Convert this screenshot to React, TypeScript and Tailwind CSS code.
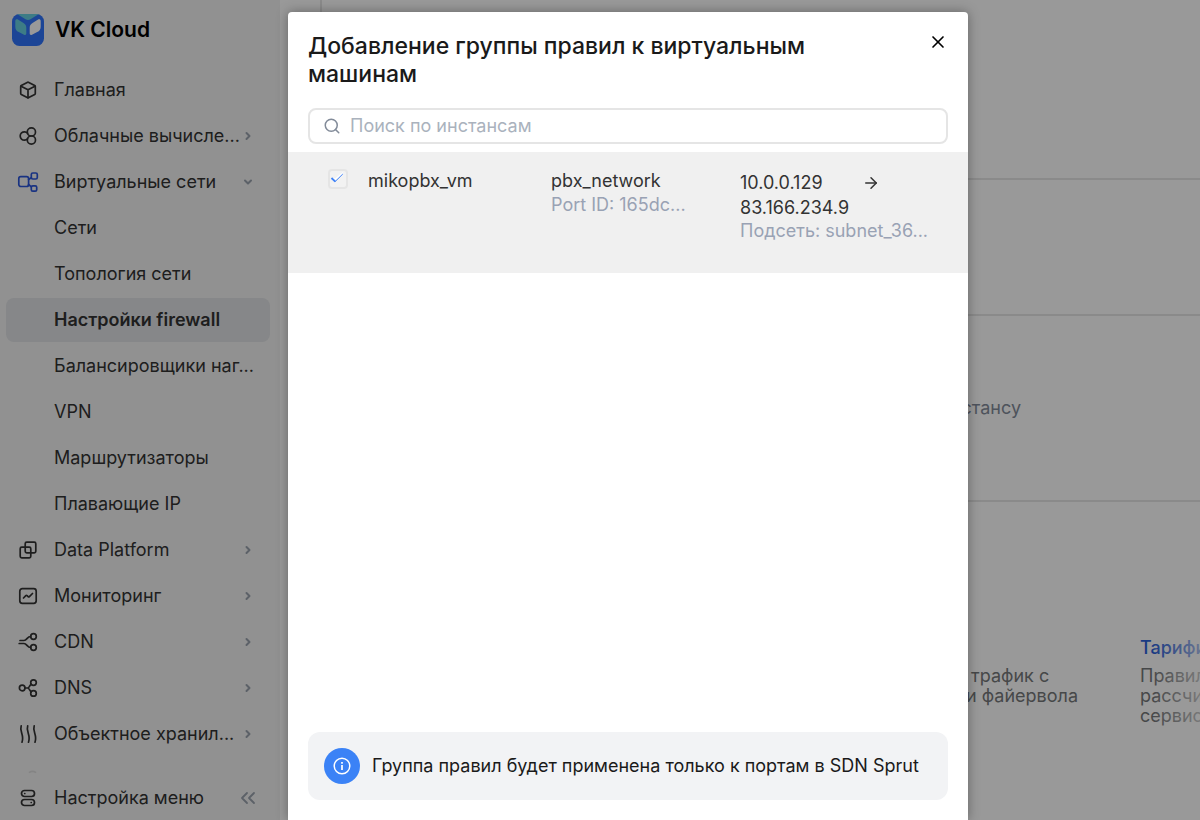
import { useState, type ReactNode } from "react";
import { ArrowRight, ChevronDown, ChevronRight, ChevronsLeft, Search, X } from "lucide-react";

type NavItem = {
  label: string;
  icon?: ReactNode;
  arrow?: "right" | "down";
  active?: boolean;
};

function Icon({ children, className = "" }: { children: ReactNode; className?: string }) {
  return (
    <svg
      viewBox="0 0 24 24"
      className={`size-6 ${className}`}
      fill="none"
      stroke="currentColor"
      strokeWidth="1.7"
      strokeLinecap="round"
      strokeLinejoin="round"
      aria-hidden="true"
    >
      {children}
    </svg>
  );
}

const CubeIcon = (
  <Icon>
    <path d="M11.2 4.4 5.3 7.6a1.2 1.2 0 0 0-.6 1v6.8c0 .4.2.8.6 1l5.9 3.2c.5.3 1.1.3 1.6 0l5.9-3.2c.4-.2.6-.6.6-1V8.6a1.2 1.2 0 0 0-.6-1l-5.9-3.2a1.7 1.7 0 0 0-1.6 0Z" />
    <path d="m5 8.2 7 3.6 7-3.6M12 11.8v8" />
  </Icon>
);

const ComputeIcon = (
  <Icon>
    <path d="M11.6 9.3a4.2 4.2 0 1 0 0 5.4" />
    <circle cx="15.4" cy="7.9" r="4.1" />
    <circle cx="15.4" cy="16.1" r="4.1" />
  </Icon>
);

const NetworkIcon = (
  <Icon className="text-[#2b55d9]">
    <rect x="2.8" y="6.7" width="9.8" height="9.8" rx="2" />
    <rect x="15.3" y="3" width="6" height="6" rx="1.5" />
    <rect x="15.3" y="15.8" width="5.4" height="5.4" rx="1.5" />
    <path d="m12.6 9.5 2.7-1.8M12.6 14.5l2.7 2.3" />
  </Icon>
);

const PlatformIcon = (
  <Icon>
    <rect x="9.2" y="4.2" width="10.6" height="10.6" rx="1.5" />
    <rect x="4.2" y="9.2" width="10.6" height="10.6" rx="1.5" />
  </Icon>
);

const MonitoringIcon = (
  <Icon>
    <rect x="3.8" y="4.7" width="16.4" height="14.6" rx="2.5" />
    <path d="m7.5 14 2.3-2.4c.4-.4.9-.4 1.3 0l1 1c.4.4.9.4 1.3 0l3.1-3.1" />
  </Icon>
);

const CdnIcon = (
  <Icon>
    <circle cx="17.5" cy="6.5" r="2.8" />
    <circle cx="17.5" cy="17.5" r="2.8" />
    <path d="M4 10.5h4c3 0 3-4 6.700-4M3.2 13.5H8c3 0 3 4 6.7 4" />
  </Icon>
);

const DnsIcon = (
  <Icon>
    <circle cx="6.2" cy="12" r="2.8" />
    <circle cx="17.5" cy="6.6" r="2.8" />
    <circle cx="17.5" cy="17.4" r="2.8" />
    <path d="M9 12h2.5c2 0 1.7-2.5 3.7-3.7M11.5 12c2 0 1.7 2.5 3.7 3.7" />
  </Icon>
);

const StorageIcon = (
  <Icon>
    <path d="M5.2 3.8c-2 5.5 3.4 9.500.8 16.400M11.700 3.800c-2 5.500 3.400 9.500.8 16.400M18.200 3.800c-2 5.500 3.400 9.500.8 16.400" />
  </Icon>
);

const MenuSettingsIcon = (
  <Icon>
    <rect x="5.5" y="4.5" width="13" height="6" rx="3" />
    <rect x="5.5" y="13.5" width="13" height="6" rx="3" />
    <path d="M8.7 7.5h.1M15.2 16.5h.1" />
  </Icon>
);

const NAV: NavItem[] = [
  { label: "Главная", icon: CubeIcon },
  { label: "Облачные вычисле...", icon: ComputeIcon, arrow: "right" },
  { label: "Виртуальные сети", icon: NetworkIcon, arrow: "down" },
  { label: "Сети" },
  { label: "Топология сети" },
  { label: "Настройки firewall", active: true },
  { label: "Балансировщики наг..." },
  { label: "VPN" },
  { label: "Маршрутизаторы" },
  { label: "Плавающие IP" },
  { label: "Data Platform", icon: PlatformIcon, arrow: "right" },
  { label: "Мониторинг", icon: MonitoringIcon, arrow: "right" },
  { label: "CDN", icon: CdnIcon, arrow: "right" },
  { label: "DNS", icon: DnsIcon, arrow: "right" },
  { label: "Объектное хранил...", icon: StorageIcon, arrow: "right" },
];

function Logo() {
  return (
    <svg viewBox="0 0 32 32" className="size-8" aria-hidden="true">
      <rect width="32" height="32" rx="7.5" fill="#2f73fa" />
      <path d="M5.5.3C6.3 0 7 0 7.500 0h17c.500 0 1.200 0 2 .3L18.500 5.200c-1.600 1-3.400 1-5 0Z" fill="#66cfe0" />
      <path d="M3.3 7.200c0-2 1.400-2.500 3-1.500l5.200 3.400c1.900 1.200 2.800 2.600 2.800 4.800v5.400c0 1.500-.9 2.100-2.300 1.400l-5.200-2.600c-2.400-1.200-3.500-2.900-3.500-5.400Z" fill="#66cfe0" />
      <path d="M28.700 7.200c0-2-1.400-2.500-3-1.500l-5.200 3.400c-1.900 1.200-2.800 2.600-2.800 4.800v5.400c0 1.500.9 2.100 2.300 1.400l5.200-2.600c2.400-1.200 3.500-2.900 3.500-5.400Z" fill="#fff" />
    </svg>
  );
}

function Sidebar() {
  return (
    <aside className="flex w-[280px] shrink-0 flex-col bg-[#f2f2f2] text-[#333]">
      <a href="#" className="flex h-[60px] shrink-0 items-center gap-[11px] pl-3 text-black">
        <Logo />
        <span className="text-[21px] font-semibold">VK Cloud</span>
      </a>
      <nav className="flex min-h-0 flex-1 flex-col gap-0.5 overflow-hidden px-1.5 pt-2">
        {NAV.map((item) => (
          <a
            key={item.label}
            href="#"
            className={`mr-1 flex h-11 shrink-0 items-center rounded-lg pl-2.5 pr-4 ${
              item.active ? "bg-[#dfe1e4] font-semibold" : ""
            }`}
          >
            <span className="mr-3.5 size-6 shrink-0">{item.icon}</span>
            <span className="min-w-0 flex-1 whitespace-nowrap">{item.label}</span>
            {item.arrow === "right" && <ChevronRight className="size-3 shrink-0 text-[#99a2ad]" strokeWidth={4} />}
            {item.arrow === "down" && <ChevronDown className="size-3 shrink-0 text-[#99a2ad]" strokeWidth={4} />}
          </a>
        ))}
        <span className="pl-2.5 pt-2.5 text-[#ddd]">
          <Icon>
            <path d="M13.5 4.3c1.8-1 4.2-1 6 0" />
          </Icon>
        </span>
      </nav>
      <div className="flex h-11 shrink-0 items-center gap-3.5 pl-4 pr-5">
        {MenuSettingsIcon}
        <a href="#" className="flex-1">Настройка меню</a>
        <button type="button" aria-label="Свернуть меню" className="text-[#99a2ad]">
          <ChevronsLeft className="size-6" strokeWidth={1.8} />
        </button>
      </div>
    </aside>
  );
}

function PageContent() {
  return (
    <main className="relative min-w-0 flex-1 overflow-hidden bg-white pl-10 text-[#76787a]">
      <section className="border-l-2 border-[#e6e6e6]">
        <div className="h-[180px] border-b-2 border-[#e6e6e6]" />
        <div className="h-[136px] border-b-2 border-[#e6e6e6]" />
        <div className="flex h-[186px] items-center justify-end border-b-2 border-[#e6e6e6] pr-[179px] text-[#828b99]">
          стансу
        </div>
      </section>
      <section className="flex justify-end pt-[134px] leading-5">
        <div className="w-[174px] whitespace-pre pt-[30px]">
          <p>{" трафик с"}</p>
          <p>и файервола</p>
        </div>
        <div className="w-[60px] whitespace-nowrap">
          <a href="#" className="mb-2 mt-0.5 block font-medium text-[#2b62db]">Тарифи</a>
          <p>Правил</p>
          <p>рассчи</p>
          <p>сервис</p>
        </div>
      </section>
      <div className="absolute bottom-0 right-0 h-[220px] w-12 bg-linear-to-r from-white/0 to-white/60" />
    </main>
  );
}

function AddGroupDialog() {
  const [query, setQuery] = useState("");
  const [checked, setChecked] = useState(true);

  return (
    <div
      role="dialog"
      aria-labelledby="dialog-title"
      className="flex w-[680px] flex-col rounded-t-[4px] bg-white text-[#333] shadow-[0_0_12px_rgba(0,0,0,0.35)]"
    >
      <header className="flex items-start justify-between px-5 pt-5">
        <h2 id="dialog-title" className="max-w-[560px] text-[23px] font-medium leading-7 text-[#1a1a1a]">
          Добавление группы правил к виртуальным машинам
        </h2>
        <button type="button" aria-label="Закрыть" className="text-black">
          <X className="size-5" strokeWidth={2} />
        </button>
      </header>

      <label className="mx-5 mt-5 flex h-9 items-center gap-[9px] rounded-lg border-2 border-[#e5e5e5] pl-[13px]">
        <Search className="size-[18px] text-[#828b99]" strokeWidth={2} />
        <input
          type="text"
          value={query}
          onChange={(e) => setQuery(e.target.value)}
          placeholder="Поиск по инстансам"
          aria-label="Поиск по инстансам"
          className="min-w-0 flex-1 outline-none placeholder:text-[#aab2bd]"
        />
      </label>

      <div className="mt-2 flex-1">
        <table className="w-full table-fixed">
          <tbody>
            <tr className="h-[121px] bg-[#f0f0f0] align-top">
              <td className="w-20 pl-10 pt-[17px]">
                <label className="relative block size-5">
                  <input
                    type="checkbox"
                    checked={checked}
                    onChange={(e) => setChecked(e.target.checked)}
                    aria-label="mikopbx_vm"
                    className="block size-5 appearance-none rounded-[4px] border-2 border-[#e5e5e5] bg-[#f2f2f2]"
                  />
                  {checked && (
                    <svg viewBox="0 0 20 20" className="pointer-events-none absolute inset-0 size-5" fill="none" aria-hidden="true">
                      <path d="M4 8.5 7 12l8-7V3L7 9.5Z" fill="#fff" />
                      <path d="M3.5 9 7.3 12.7" stroke="#3f82f7" strokeWidth="1.8" />
                      <path d="M7 12.7 14.8 5" stroke="#3f82f7" strokeWidth="1" />
                    </svg>
                  )}
                </label>
              </td>
              <td className="w-[183px] pt-[17px] leading-6">mikopbx_vm</td>
              <td className="w-[189px] pt-[17px] leading-6">
                <div>pbx_network</div>
                <div className="text-[#99a2b4]">Port ID: 165dc...</div>
              </td>
              <td className="pt-[18px] leading-[25px]">
                <div className="flex items-center">
                  <span className="w-[122px]">10.0.0.129</span>
                  <ArrowRight className="size-[18px]" strokeWidth={2} />
                </div>
                <div>83.166.234.9</div>
                <div className="leading-[22px] text-[#99a2b4]">Подсеть: subnet_36...</div>
              </td>
            </tr>
          </tbody>
        </table>
      </div>

      <div className="mx-5 mb-5 flex items-center gap-3 rounded-xl bg-[#f2f3f5] p-4 text-[#1a1a1a]">
        <span className="flex size-9 shrink-0 items-center justify-center rounded-full bg-[#3b82f6] text-white">
          <svg viewBox="0 0 20 20" className="size-5" fill="none" stroke="currentColor" strokeWidth="1.5" aria-hidden="true">
            <circle cx="10" cy="10" r="7.8" />
            <path d="M10 9v5M10 6v1.700" strokeWidth="1.7" />
          </svg>
        </span>
        <p>Группа правил будет применена только к портам в SDN Sprut</p>
      </div>
    </div>
  );
}

export default function App() {
  return (
    <div className="relative flex h-screen overflow-hidden font-['Inter','Liberation_Sans',sans-serif] text-lg">
      <Sidebar />
      <PageContent />
      <div className="absolute inset-0 flex justify-center bg-black/40 pl-14 pt-3">
        <AddGroupDialog />
      </div>
    </div>
  );
}
